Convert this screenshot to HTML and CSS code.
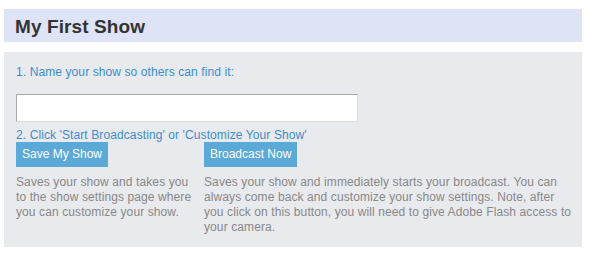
FILE: index.html
```html
<!DOCTYPE html>
<html>
<head>
<meta charset="utf-8">
<title>My First Show</title>
<link rel="stylesheet" href="styles.css">
</head>
<body>
<div class="wrap">
	<h1 class="title">My First Show</h1>
	<div class="panel">
		<p class="step">1. Name your show so others can find it:</p>
		<input class="showname" type="text">
		<p class="step step2">2. Click 'Start Broadcasting' or 'Customize Your Show'</p>
		<div class="cols">
			<div class="col">
				<a class="btn" href="#">Save My Show</a>
				<p class="desc">Saves your show and takes you to the show settings page where you can customize your show.</p>
			</div>
			<div class="col">
				<a class="btn" href="#">Broadcast Now</a>
				<p class="desc">Saves your show and immediately starts your broadcast. You can always come back and customize your show settings. Note, after you click on this button, you will need to give Adobe Flash access to your camera.</p>
			</div>
		</div>
	</div>
</div>
</body>
</html>
```

FILE: styles.css
```css
body{
	margin:0;
	font-family:"Liberation Sans", Arial, sans-serif;
	font-size:12px;
	background:#fff;
}
.wrap{
	width:578px;
	margin:9px 0 0 4px;
}
.title{
	margin:0;
	height:31px;
	line-height:31px;
	padding:2px 0 0 11px;
	background:#dfe3f6;
	color:#333;
	font-size:19px;
	letter-spacing:0.1px;
	font-weight:bold;
}
.panel{
	box-sizing:border-box;
	margin-top:10px;
	background:#e9eaee;
	padding:13px 8px 12px 12px;
	height:195px;
}
.step{
	margin:0;
	line-height:15px;
	color:#3b8ecb;
	letter-spacing:0.1px;
}
.showname{
	display:block;
	box-sizing:border-box;
	width:342px;
	height:28px;
	margin:14px 0 0 0;
	border:1px solid #a9a9a9;
	border-right-color:#ddd;
	border-bottom-color:#ddd;
	background:#fff;
	padding:0 4px;
}
.step2{
	margin-top:6px;
	line-height:14px;
}
.cols{
	display:grid;
	grid-template-columns:188px 1fr;
}
.col:first-child .desc{
	padding-right:8px;
}
.btn{
	display:inline-block;
	height:25px;
	line-height:25px;
	padding:0 6px;
	background:#5aa9d7;
	color:#fff;
	text-decoration:none;
	font-size:12px;
}
.desc{
	margin:8px 0 0 0;
	line-height:15px;
	color:#888;
	letter-spacing:0.1px;
}
```
